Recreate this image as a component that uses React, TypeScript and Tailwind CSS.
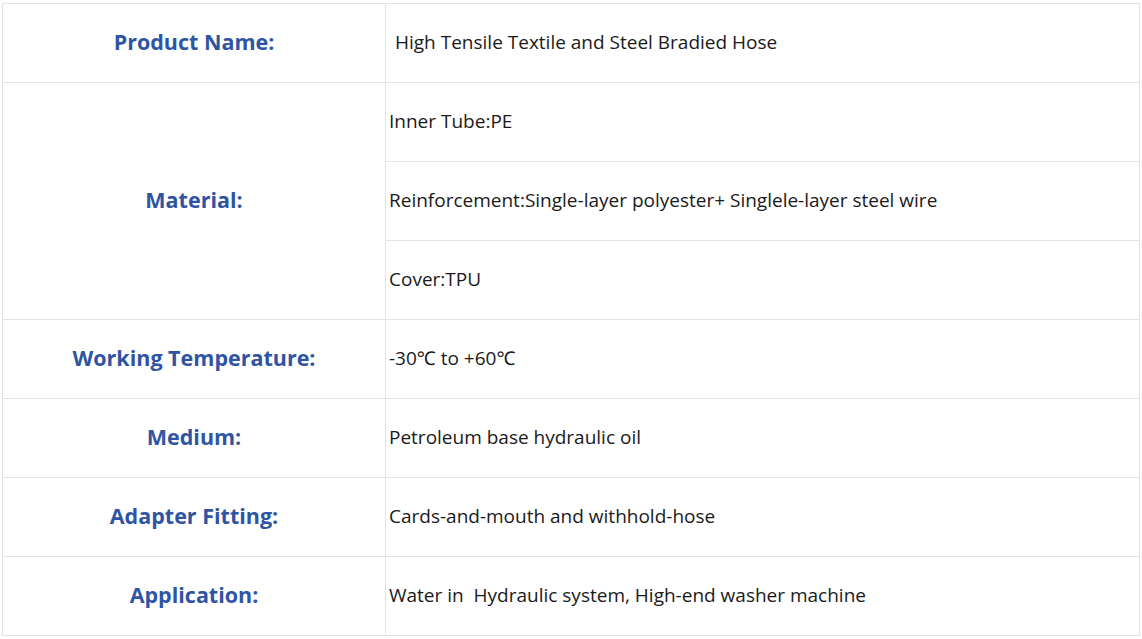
const rows: { label: string; values: string[]; first?: boolean }[] = [
  { label: "Product Name:", values: ["High Tensile Textile and Steel Bradied Hose"], first: true },
  {
    label: "Material:",
    values: [
      "Inner Tube:PE",
      "Reinforcement:Single-layer polyester+ Singlele-layer steel wire",
      "Cover:TPU",
    ],
  },
  { label: "Working Temperature:", values: ["-30℃ to +60℃"] },
  { label: "Medium:", values: ["Petroleum base hydraulic oil"] },
  { label: "Adapter Fitting:", values: ["Cards-and-mouth and withhold-hose"] },
  { label: "Application:", values: ["Water in  Hydraulic system, High-end washer machine"] },
];

export default function App() {
  return (
    <div className="min-h-screen bg-white pt-[3px] pl-[2px]">
      <table
        className="w-[1138px] table-fixed border-collapse"
        style={{ fontFamily: '"Open Sans", "Noto Sans", sans-serif' }}
      >
        <colgroup>
          <col className="w-[383px]" />
          <col />
        </colgroup>
        <tbody>
          {rows.map((row) =>
            row.values.map((v, i) => (
              <tr key={row.label + i} className="h-[79px]">
                {i === 0 && (
                  <td
                    rowSpan={row.values.length}
                    className="border border-[#e3e3e3] pb-[2px] text-center align-middle text-[21.5px] font-bold text-[#2f54a3]"
                  >
                    {row.label}
                  </td>
                )}
                <td
                  className={`border border-[#e3e3e3] pb-[2px] align-middle whitespace-pre text-[19px] text-[#1a1a1a] ${
                    row.first ? "pl-[9px]" : "pl-[3px]"
                  }`}
                >
                  {v}
                </td>
              </tr>
            ))
          )}
        </tbody>
      </table>
    </div>
  );
}
